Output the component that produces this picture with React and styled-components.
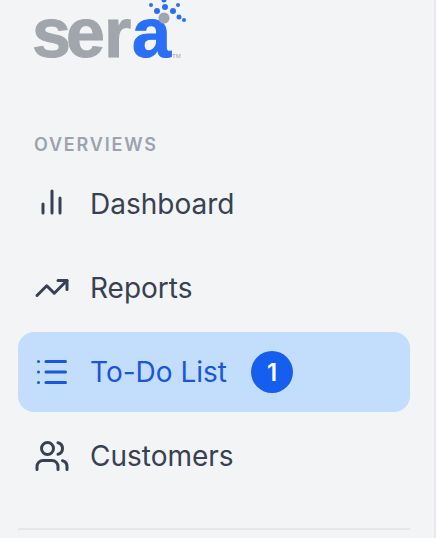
import React from 'react';
import styled, { createGlobalStyle } from 'styled-components';
import { TrendingUp, List, Users } from 'lucide-react';

const GlobalStyle = createGlobalStyle`
  html, body {
    margin: 0;
    padding: 0;
    background: #f3f4f6;
  }
  * {
    box-sizing: border-box;
  }
`;

const Sidebar = styled.aside`
  width: 436px;
  height: 538px;
  overflow: hidden;
  padding: 0 24px 0 18px;
  border-right: 2px solid #e5e7eb;
  background: #f3f4f6;
  font-family: Inter, "Liberation Sans", sans-serif;
`;

const LogoWrap = styled.div`
  height: 133px;
  padding-left: 14px;
`;

const SectionLabel = styled.div`
  height: 24px;
  padding-left: 16px;
  margin-bottom: 7px;
  font-size: 18px;
  line-height: 24px;
  font-weight: 600;
  letter-spacing: 1.8px;
  color: #9ca3af;
`;

const Menu = styled.nav`
  display: flex;
  flex-direction: column;
  gap: 4px;
`;

const MenuItem = styled.div`
  height: 80px;
  display: flex;
  align-items: center;
  gap: 20px;
  padding-left: 16px;
  border-radius: 16px;
  background: ${(props) => (props.$active ? '#c3ddfd' : 'transparent')};
  color: ${(props) => (props.$active ? '#1a56db' : '#374151')};
`;

const ItemText = styled.span`
  font-size: 28px;
  line-height: 40px;
  font-weight: 400;
`;

const Badge = styled.span`
  width: 42px;
  height: 42px;
  margin-left: 4px;
  border-radius: 50%;
  display: flex;
  align-items: center;
  justify-content: center;
  background: #155eef;
  color: #fff;
  font-size: 24px;
  font-weight: 600;
`;

const Divider = styled.hr`
  margin: 32px 0 0;
  border: none;
  height: 2px;
  background: #e5e7eb;
`;

const SeraLogo = () => (
  <svg width="164" height="66" viewBox="0 0 164 66">
    <text
      x="0 34 72"
      y="57"
      fontFamily="Liberation Sans, sans-serif"
      fontWeight="700"
      fontSize="70"
      fill="#a0a6ab"
      stroke="#a0a6ab"
      strokeWidth="1"
    >
      ser
    </text>
    <text
      x="100"
      y="57"
      fontFamily="Liberation Sans, sans-serif"
      fontWeight="700"
      fontSize="70"
      fill="#2a6ff6"
      stroke="#2a6ff6"
      strokeWidth="1"
    >
      a
    </text>
    <text x="140" y="58" fontFamily="Liberation Sans, sans-serif" fontSize="6" fill="#a0a6ab">
      TM
    </text>
    <circle cx="132" cy="18" r="5.5" fill="#a0a6ab" />
    <g fill="#2a6ff6">
      <circle cx="119" cy="5" r="2" />
      <circle cx="132" cy="0" r="2.5" />
      <circle cx="146" cy="5" r="2" />
      <circle cx="125" cy="11" r="3" />
      <circle cx="133" cy="7" r="3" />
      <circle cx="141" cy="11" r="3" />
      <circle cx="147" cy="17" r="2.5" />
      <circle cx="152" cy="20" r="2" />
    </g>
  </svg>
);

const BarsIcon = () => (
  <svg width="36" height="36" viewBox="0 0 36 36" fill="none" stroke="currentColor" strokeWidth="3" strokeLinecap="round">
    <path d="M9 18v9" />
    <path d="M18 5v22" />
    <path d="M26 12v15" />
  </svg>
);

const items = [
  { label: 'Dashboard', icon: <BarsIcon /> },
  { label: 'Reports', icon: <TrendingUp size={36} /> },
  { label: 'To-Do List', icon: <List size={36} />, active: true, badge: 1 },
  { label: 'Customers', icon: <Users size={36} /> },
];

export default function App() {
  return (
    <>
      <GlobalStyle />
      <Sidebar>
        <LogoWrap>
          <SeraLogo />
        </LogoWrap>
        <SectionLabel>OVERVIEWS</SectionLabel>
        <Menu>
          {items.map((item) => (
            <MenuItem key={item.label} $active={item.active}>
              {item.icon}
              <ItemText>{item.label}</ItemText>
              {item.badge && <Badge>{item.badge}</Badge>}
            </MenuItem>
          ))}
        </Menu>
        <Divider />
      </Sidebar>
    </>
  );
}
